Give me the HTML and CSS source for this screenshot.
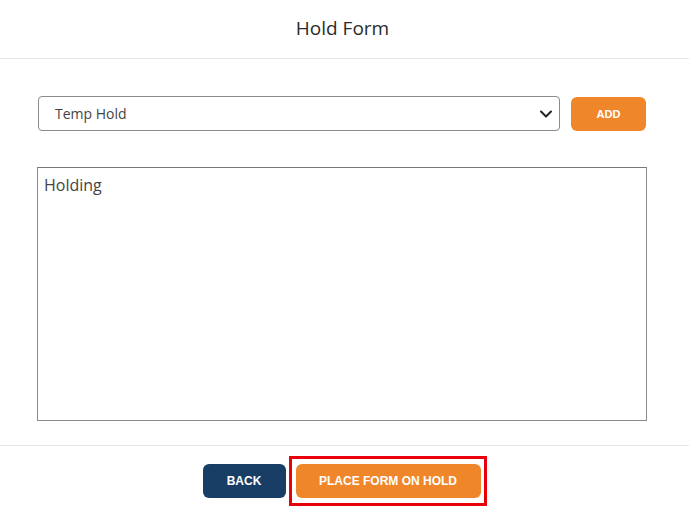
FILE: index.html
```html
<!DOCTYPE html>
<html>
<head>
<meta charset="utf-8">
<link rel="stylesheet" href="styles.css">
</head>
<body>
<header class="header"><h1 class="title">Hold Form</h1></header>
<main class="content">
  <div class="row">
    <div class="select">
      <span class="select-text">Temp Hold</span>
      <svg class="chev" width="14" height="10" viewBox="0 0 14 10"><path d="M2 2.5 L7 7.5 L12 2.5" fill="none" stroke="#222" stroke-width="2" stroke-linecap="round" stroke-linejoin="round"/></svg>
    </div>
    <button class="btn btn-orange btn-add">ADD</button>
  </div>
  <div class="textarea">Holding</div>
</main>
<footer class="footer">
  <button class="btn btn-navy btn-back">BACK</button>
  <span class="highlight"><button class="btn btn-orange btn-place">PLACE FORM ON HOLD</button></span>
</footer>
</body>
</html>
```
FILE: styles.css
```css
html, body { margin: 0; padding: 0; background: #fff; }
body { font-family: "Open Sans", "Noto Sans", sans-serif; color: #333; width: 689px; }
.header { height: 58px; border-bottom: 1px solid #e6e6e6; display: flex; align-items: center; justify-content: center; }
.title { margin: 0; font-size: 19px; font-weight: 400; color: #2b2b2b; padding-bottom: 3px; padding-right: 4px; }
.content { padding: 37px 42px 0 37px; }
.row { display: flex; align-items: center; height: 35px; }
.select { box-sizing: border-box; margin-left: 1px; width: 522px; height: 35px; border: 1px solid #8a8a8a; border-radius: 4px; display: flex; align-items: center; justify-content: space-between; padding: 0 6px 0 16px; }
.select-text { font-size: 14px; color: #444; }
.chev { display: block; }
.btn { border: none; color: #fff; font-family: "Liberation Sans", Arial, sans-serif; font-weight: 700; font-size: 12px; border-radius: 6px; cursor: pointer; padding: 0; }
.btn-orange { background: #f0862a; }
.btn-navy { background: #183e66; }
.btn-add { margin-left: 11px; width: 75px; height: 34px; font-size: 11px; }
.textarea { box-sizing: border-box; margin-top: 36px; width: 610px; height: 254px; border: 1px solid #8a8a8a; border-top-color: #777; padding: 6px 6px; font-size: 16px; color: #444; }
.footer { margin-top: 24px; border-top: 1px solid #e6e6e6; display: flex; justify-content: center; align-items: center; padding-top: 10px; padding-left: 0; }
.btn-back { width: 83px; height: 34px; margin-right: 3px; }
.highlight { display: inline-flex; border: 3px solid #e8000b; padding: 5px 3px 5px 4px; }
.btn-place { width: 185px; height: 34px; }
```
